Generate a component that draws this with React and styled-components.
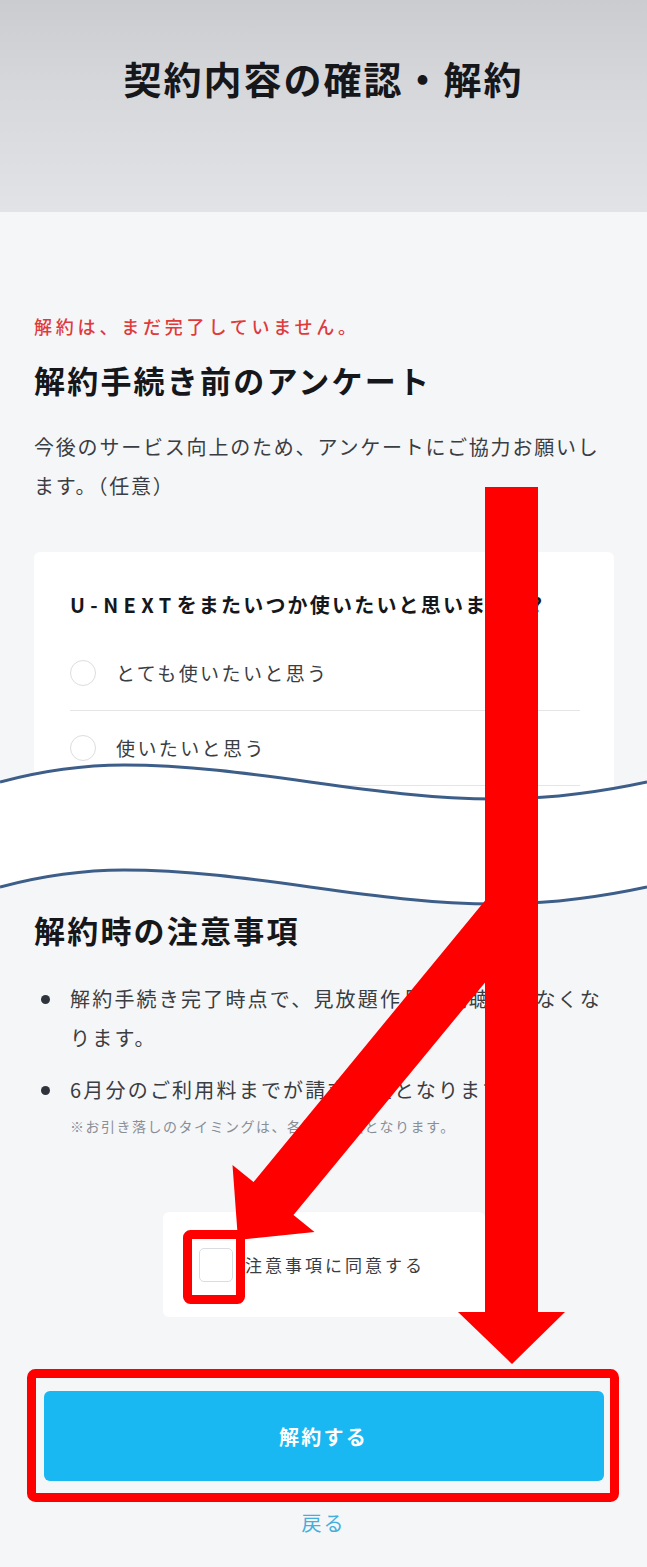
import React from "react";
import styled, { createGlobalStyle } from "styled-components";

const GlobalStyle = createGlobalStyle`
  html, body { margin: 0; padding: 0; background: #f5f6f8; }
  body { font-family: "Noto Sans CJK JP", "Noto Sans", sans-serif; -webkit-font-smoothing: antialiased; }
  * { box-sizing: border-box; }
`;

const Page = styled.div`
  position: relative;
  width: 647px;
  min-height: 1567px;
  background: #f5f6f8;
  overflow: hidden;
  padding-bottom: 30px;
`;

const Header = styled.header`
  height: 212px;
  background: linear-gradient(180deg, #cbccd0 0%, #d6d7da 40%, #e2e3e6 100%);
  display: flex;
  justify-content: center;
  padding-top: 53px;
`;

const Title = styled.h1`
  margin: 0;
  font-size: 38px;
  line-height: 50px;
  font-weight: 700;
  letter-spacing: 2px;
  color: #15171b;
`;

const Section = styled.section`
  padding: ${(p) => p.$top || 0}px 33px 0 34px;
`;

const Alert = styled.p`
  margin: 0;
  font-size: 18px;
  line-height: 26px;
  font-weight: 500;
  letter-spacing: 3.8px;
  color: #e03a3a;
`;

const Heading = styled.h2`
  margin: ${(p) => p.$mt || 0}px 0 0;
  font-size: 31px;
  line-height: 40px;
  font-weight: 700;
  letter-spacing: 2.2px;
  color: #15171b;
`;

const Lead = styled.p`
  margin: 27px 0 0;
  font-size: 20px;
  line-height: 39px;
  letter-spacing: 1.8px;
  color: #3a3d42;
`;

const Card = styled.div`
  margin-top: 47px;
  background: #ffffff;
  border-radius: 6px;
  padding: 39px 34px 20px 36px;
`;

const Question = styled.p`
  margin: 0;
  font-size: 20px;
  line-height: 28px;
  font-weight: 700;
  letter-spacing: 2.2px;
  color: #15171b;
`;

const Brand = styled.span`
  letter-spacing: 5.4px;
`;

const Options = styled.div`
  margin-top: 17px;
`;

const OptionRow = styled.label`
  display: flex;
  align-items: center;
  gap: 20px;
  padding: 23px 0 24px;
  border-bottom: 1px solid #e4e5e7;
`;

const Radio = styled.span`
  width: 26px;
  height: 26px;
  border-radius: 50%;
  border: 1.5px solid #dcdde0;
  background: #fff;
  flex: none;
`;

const OptionText = styled.span`
  font-size: 19px;
  line-height: 27px;
  letter-spacing: 2.4px;
  color: #3a3d42;
`;

const WaveBreak = styled.svg`
  position: relative;
  display: block;
  width: 647px;
  height: 150px;
  margin-top: -46px;
`;

const NoteList = styled.ul`
  list-style: none;
  margin: 29px 0 0;
  padding: 0;
  display: flex;
  flex-direction: column;
  gap: 13px;
`;

const NoteItem = styled.li`
  display: grid;
  grid-template-columns: 36px 1fr;
`;

const Dot = styled.span`
  width: 9px;
  height: 9px;
  border-radius: 50%;
  background: #2f343c;
  margin: 16px 0 0 7px;
`;

const NoteText = styled.div`
  font-size: 20px;
  line-height: 39px;
  letter-spacing: 2.2px;
  color: #3a3d42;
`;

const SmallNote = styled.p`
  margin: 6px 0 0;
  font-size: 14px;
  line-height: 22px;
  letter-spacing: 1.5px;
  color: #8a8e95;
`;

const AgreeCard = styled.label`
  margin: 75px auto 0;
  width: 322px;
  height: 105px;
  background: #ffffff;
  border-radius: 6px;
  display: flex;
  align-items: center;
  gap: 12px;
  padding-left: 36px;
`;

const CheckBox = styled.span`
  width: 34px;
  height: 34px;
  border-radius: 5px;
  border: 1.5px solid #d9dde2;
  background: #fff;
  flex: none;
`;

const AgreeText = styled.span`
  font-size: 17px;
  line-height: 24px;
  letter-spacing: 3px;
  color: #3a3d42;
`;

const PrimaryButton = styled.button`
  display: flex;
  align-items: center;
  justify-content: center;
  margin: 74px auto 0;
  width: 560px;
  height: 90px;
  border: none;
  border-radius: 6px;
  background: #19b8f2;
  color: #ffffff;
  font-family: inherit;
  font-size: 20px;
  font-weight: 700;
  letter-spacing: 2.3px;
`;

const BackLink = styled.a`
  display: block;
  margin-top: 28px;
  text-align: center;
  font-size: 20px;
  line-height: 28px;
  letter-spacing: 2px;
  color: #45aedc;
  text-decoration: none;
`;

const Annotations = styled.svg`
  position: absolute;
  top: 0;
  left: 0;
  width: 647px;
  height: 1567px;
  pointer-events: none;
`;

const topWave = "M0 22 C45 10 85 5 124 5 C250 5 370 39 496 39 C560 39 610 30 647 22";
const bottomWave = "M0 127 C45 115 85 110 124 110 C250 110 370 144 496 144 C560 144 610 135 647 127";
const fillPath =
  "M0 22 C45 10 85 5 124 5 C250 5 370 39 496 39 C560 39 610 30 647 22 L647 127 C610 135 560 144 496 144 C370 144 250 110 124 110 C85 110 45 115 0 127 Z";

export default function App() {
  return (
    <>
      <GlobalStyle />
      <Page>
        <Header>
          <Title>契約内容の確認・解約</Title>
        </Header>

        <Section $top={101}>
          <Alert>解約は、まだ完了していません。</Alert>
          <Heading $mt={21}>解約手続き前のアンケート</Heading>
          <Lead>今後のサービス向上のため、アンケートにご協力お願いします。（任意）</Lead>
          <Card>
            <Question>
              <Brand>U-NEXT</Brand>をまたいつか使いたいと思いますか?
            </Question>
            <Options>
              <OptionRow>
                <Radio />
                <OptionText>とても使いたいと思う</OptionText>
              </OptionRow>
              <OptionRow>
                <Radio />
                <OptionText>使いたいと思う</OptionText>
              </OptionRow>
            </Options>
          </Card>
        </Section>

        <WaveBreak viewBox="0 0 647 150">
          <path d={fillPath} fill="#ffffff" />
          <path d={topWave} fill="none" stroke="#3d5e89" strokeWidth="3" />
          <path d={bottomWave} fill="none" stroke="#3d5e89" strokeWidth="3" />
        </WaveBreak>

        <Section>
          <Heading>解約時の注意事項</Heading>
          <NoteList>
            <NoteItem>
              <Dot />
              <NoteText>解約手続き完了時点で、見放題作品が視聴できなくなります。</NoteText>
            </NoteItem>
            <NoteItem>
              <Dot />
              <NoteText>
                6月分のご利用料までが請求対象となります。
                <SmallNote>※お引き落しのタイミングは、各決済方法となります。</SmallNote>
              </NoteText>
            </NoteItem>
          </NoteList>

          <AgreeCard>
            <CheckBox />
            <AgreeText>注意事項に同意する</AgreeText>
          </AgreeCard>
        </Section>

        <PrimaryButton>解約する</PrimaryButton>
        <BackLink>戻る</BackLink>

        <Annotations viewBox="0 0 647 1567">
          <polygon
            points="485,487 538,487 538,1312 565,1312 512,1364 458,1312 485,1312"
            fill="#ff0000"
          />
          <polygon
            points="511,869 253.5,1182 232.5,1165 238,1240 314.5,1232 293.5,1215 511,951"
            fill="#ff0000"
          />
          <rect x="187.5" y="1234.5" width="53" height="65" rx="3" fill="none" stroke="#ff0000" strokeWidth="9" />
          <rect x="31.5" y="1373.5" width="583" height="124" rx="4" fill="none" stroke="#ff0000" strokeWidth="9" />
        </Annotations>
      </Page>
    </>
  );
}
